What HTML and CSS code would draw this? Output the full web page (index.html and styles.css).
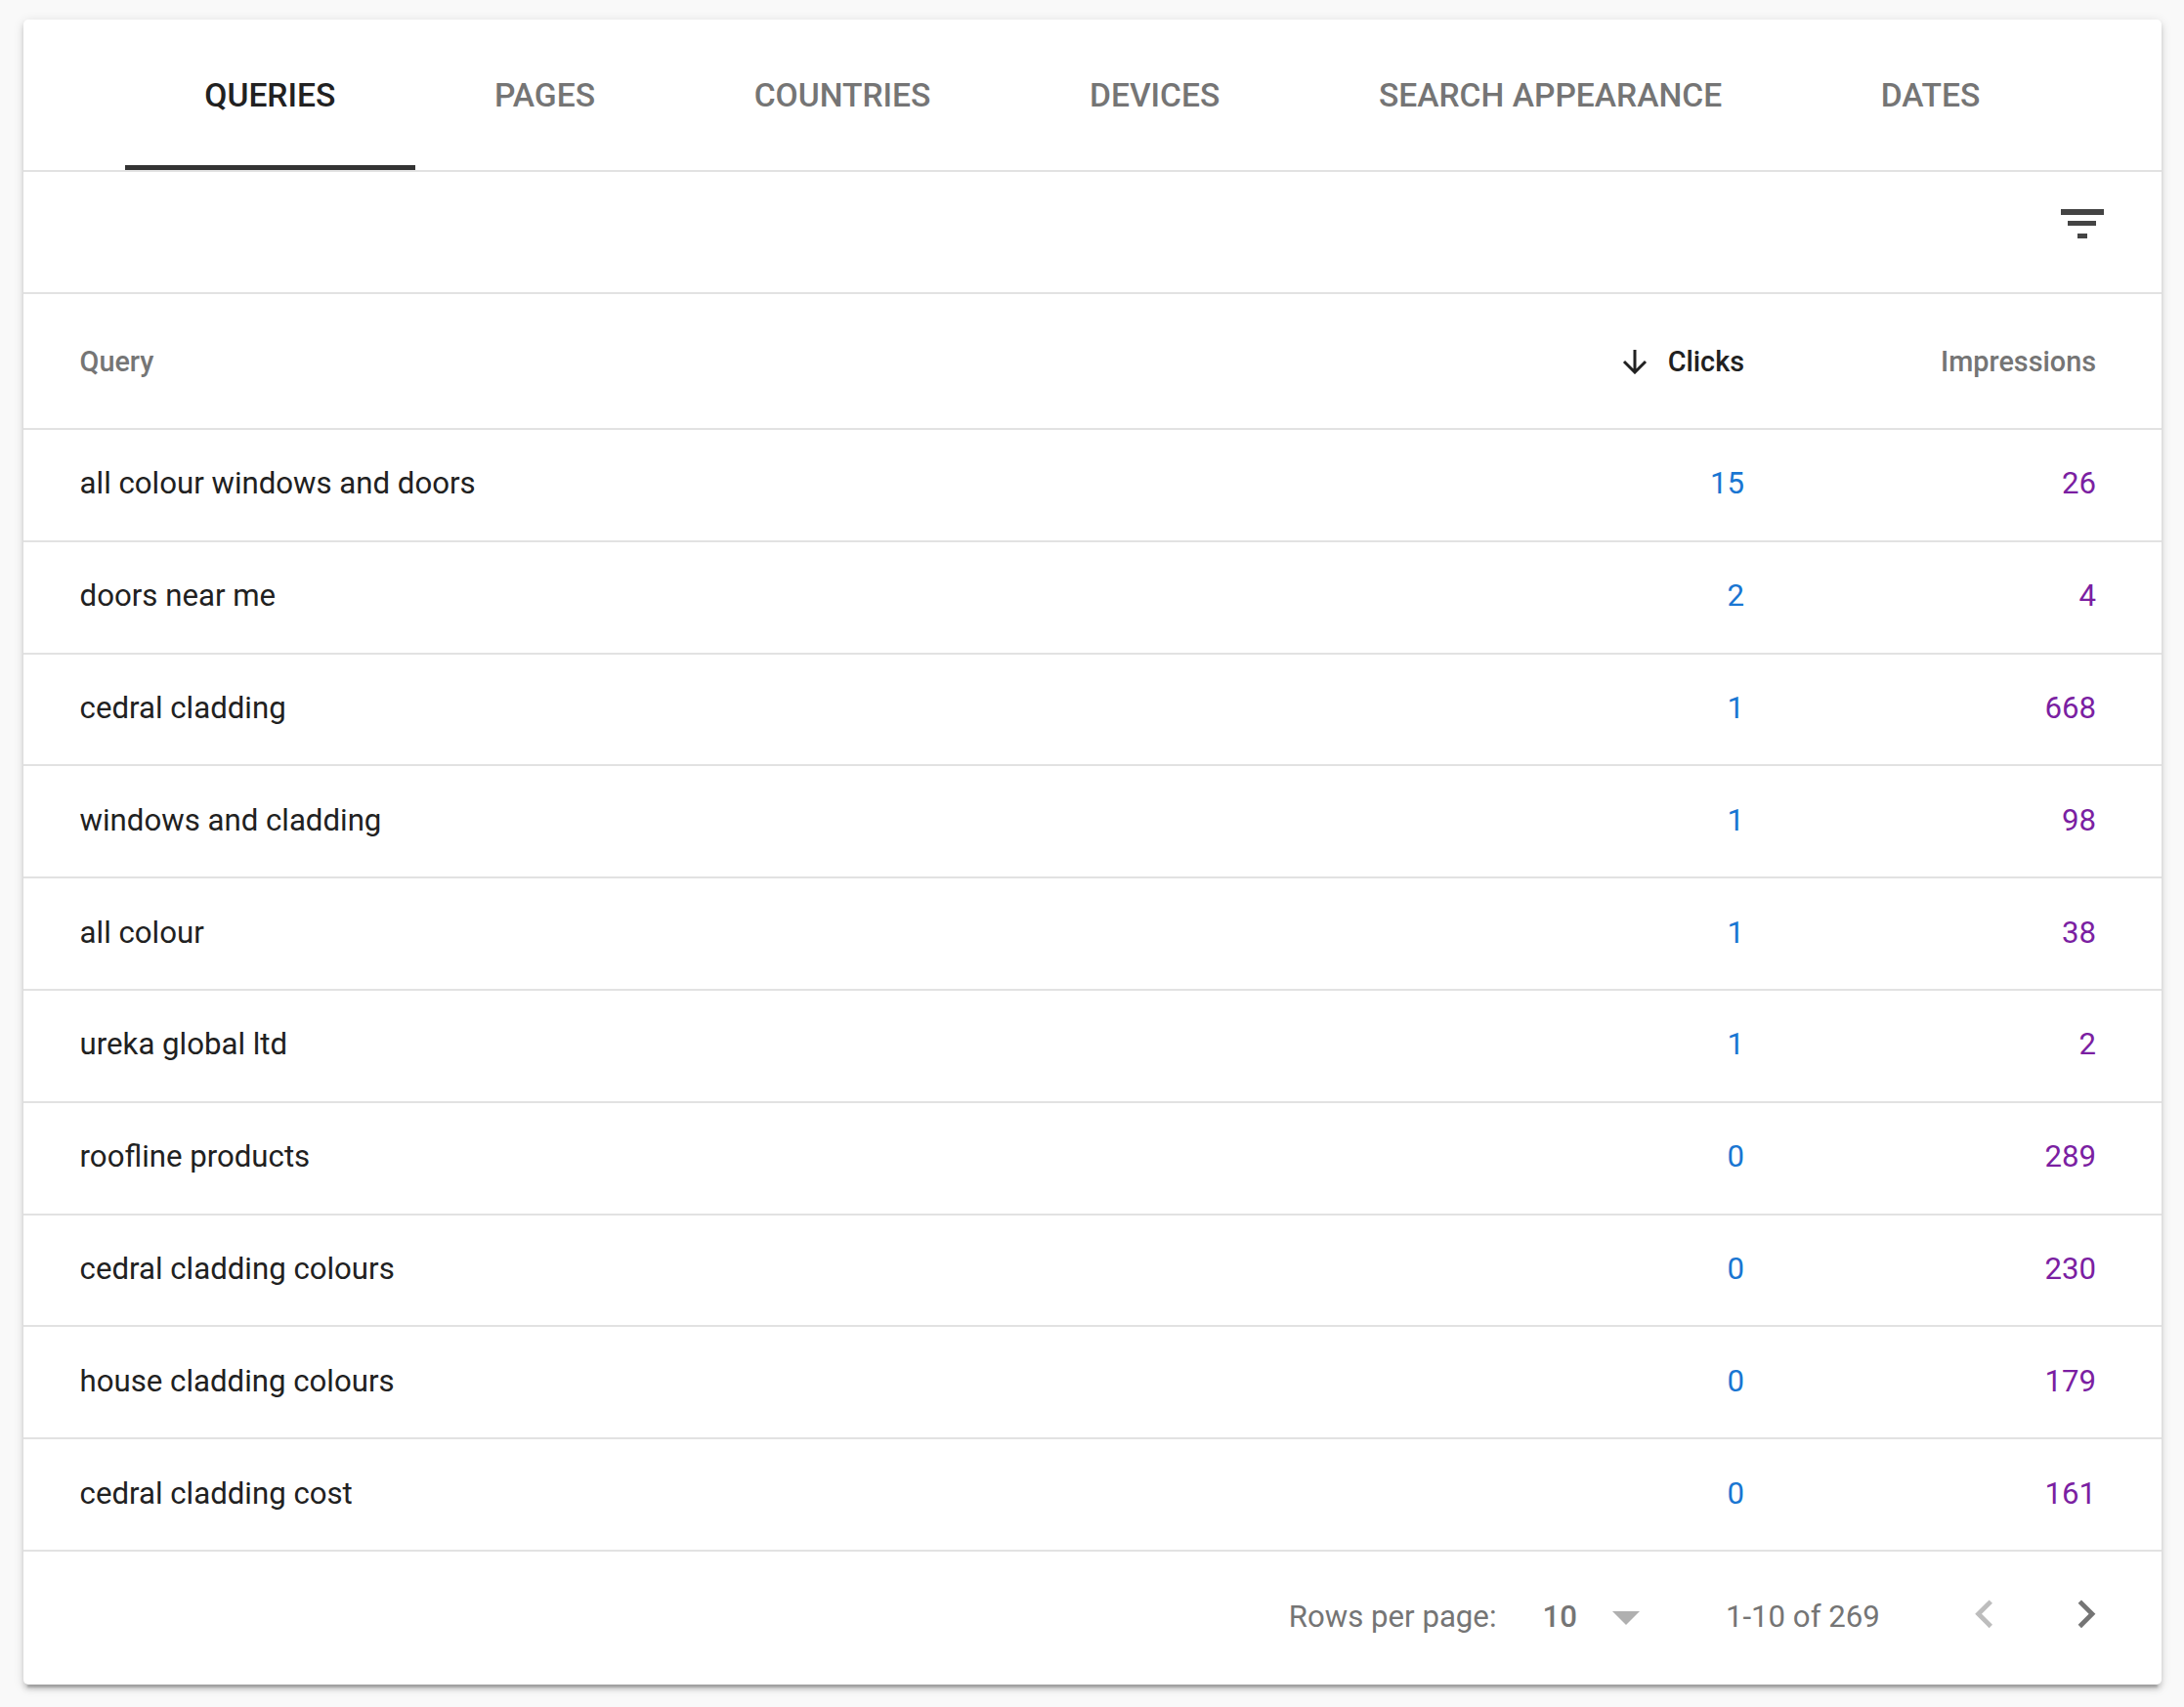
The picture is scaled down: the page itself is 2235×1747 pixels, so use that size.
FILE: index.html
```html
<!DOCTYPE html>
<html lang="en">
<head>
<meta charset="utf-8">
<title>Search performance table</title>
<link rel="stylesheet" href="styles.css">
</head>
<body>
<main class="card">
  <nav class="tabs">
    <a class="tab active">QUERIES</a>
    <a class="tab">PAGES</a>
    <a class="tab">COUNTRIES</a>
    <a class="tab">DEVICES</a>
    <a class="tab">SEARCH APPEARANCE</a>
    <a class="tab">DATES</a>
  </nav>
  <div class="toolbar">
    <svg class="filter-icon" viewBox="0 0 44 30" width="44" height="30"><path d="M0 0h44v6H0zM7 12h29v5H7zM17 25h10v5H17z"/></svg>
  </div>
  <div class="row head">
    <div>Query</div>
    <div class="num sorted"><svg class="sort-icon" viewBox="0 0 26 26" width="26" height="26"><path d="M13 1v23M2 13l11 11 11-11" fill="none" stroke="#212121" stroke-width="3"/></svg><span>Clicks</span></div>
    <div class="num">Impressions</div>
  </div>
  <div class="row"><div>all colour windows and doors</div><div class="num clicks">15</div><div class="num imp">26</div></div>
  <div class="row"><div>doors near me</div><div class="num clicks">2</div><div class="num imp">4</div></div>
  <div class="row"><div>cedral cladding</div><div class="num clicks">1</div><div class="num imp">668</div></div>
  <div class="row"><div>windows and cladding</div><div class="num clicks">1</div><div class="num imp">98</div></div>
  <div class="row"><div>all colour</div><div class="num clicks">1</div><div class="num imp">38</div></div>
  <div class="row"><div>ureka global ltd</div><div class="num clicks">1</div><div class="num imp">2</div></div>
  <div class="row"><div>roofline products</div><div class="num clicks">0</div><div class="num imp">289</div></div>
  <div class="row"><div>cedral cladding colours</div><div class="num clicks">0</div><div class="num imp">230</div></div>
  <div class="row"><div>house cladding colours</div><div class="num clicks">0</div><div class="num imp">179</div></div>
  <div class="row"><div>cedral cladding cost</div><div class="num clicks">0</div><div class="num imp">161</div></div>
  <footer class="pager">
    <span class="rows-label">Rows per page:</span>
    <span class="rows-value">10</span>
    <svg class="caret" viewBox="0 0 28 14" width="28" height="14"><path d="M0 0h28L14 14z"/></svg>
    <span class="range">1-10 of 269</span>
    <svg class="chev prev" viewBox="0 0 24 24"><path d="M15.41 7.41L14 6l-6 6 6 6 1.41-1.41L10.83 12z"/></svg>
    <svg class="chev next" viewBox="0 0 24 24"><path d="M10 6L8.59 7.41 13.17 12l-4.58 4.59L10 18l6-6z"/></svg>
  </footer>
</main>
</body>
</html>
```
FILE: styles.css
```css
* { box-sizing: border-box; }
html, body { margin: 0; }
body {
  background: #f9f9f9;
  padding: 20px 23px 23px 24px;
  font-family: Roboto, "Liberation Sans", sans-serif;
  color: #212121;
}
.card {
  height: 1704px;
  background: #fff;
  border-radius: 5px;
  box-shadow: 0 4.8px 4.8px rgba(0,0,0,.14), 0 7.2px 2.4px -4.8px rgba(0,0,0,.2), 0 2.4px 12px rgba(0,0,0,.12);
  display: flex;
  flex-direction: column;
}
.tabs {
  display: flex;
  height: 156px;
  padding-left: 104px;
  border-bottom: 2px solid #e2e2e2;
}
.tab {
  height: 154px;
  padding: 5px 81.3px 0;
  display: flex;
  align-items: center;
  font-size: 33.6px;
  font-weight: 500;
  color: #757575;
  border-bottom: 5px solid transparent;
}
.tab.active { color: #212121; border-bottom-color: #333; }
.toolbar {
  height: 125px;
  padding: 38px 59px 0 0;
  display: flex;
  justify-content: flex-end;
  align-items: flex-start;
  border-bottom: 2px solid #e2e2e2;
}
.filter-icon { fill: #444; }
.row {
  display: grid;
  grid-template-columns: 1fr 200px 360px;
  align-items: center;
  height: 114.8px;
  padding: 0 67px 3px 57.6px;
  font-size: 31.2px;
  border-bottom: 2px solid #e2e2e2;
}
.row.head {
  height: 139px;
  padding: 1px 67px 0 57.6px;
  font-size: 28.8px;
  font-weight: 500;
  color: #757575;
}
.num { text-align: right; }
.sorted {
  display: flex;
  justify-content: flex-end;
  align-items: center;
  gap: 21px;
  color: #212121;
}
.clicks { color: #1976d2; }
.imp { color: #7b1fa2; }
.pager {
  flex: 1;
  display: flex;
  align-items: center;
  justify-content: flex-end;
  padding: 0 48px 0 0;
  font-size: 31.2px;
  color: #757575;
}
.rows-label, .rows-value, .range { margin-top: -2px; }
.rows-value { margin-left: 47px; font-weight: 500; }
.caret { margin-left: 36px; fill: #b0b0b0; }
.range { margin-left: 88px; }
.chev { width: 57.6px; height: 57.6px; margin-top: -8px; }
.prev { margin-left: 78px; fill: #bdbdbd; }
.next { margin-left: 47px; fill: #757575; }
```
